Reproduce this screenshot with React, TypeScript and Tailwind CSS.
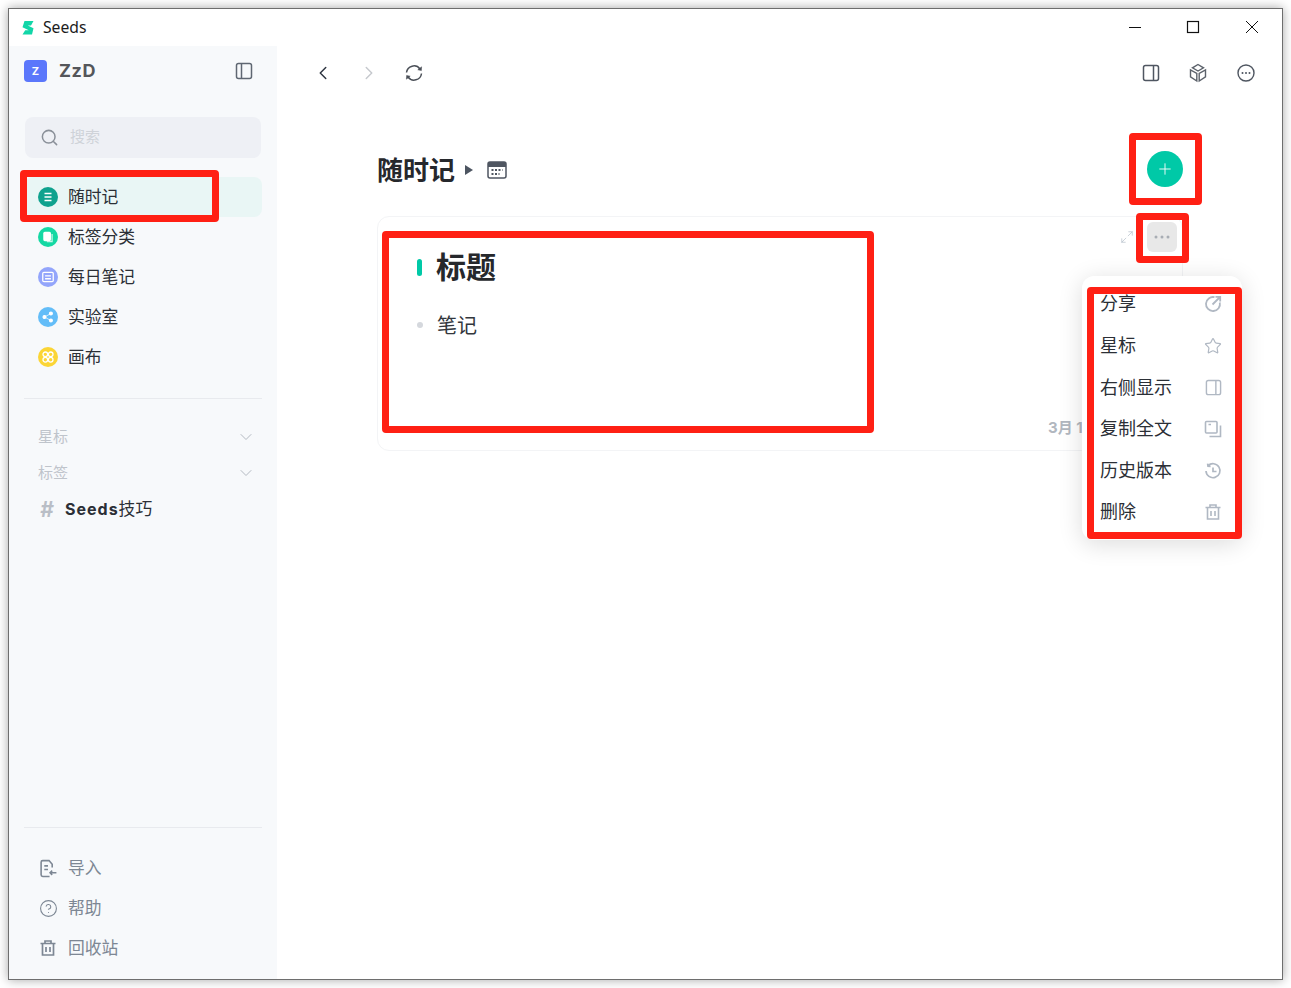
import type { ReactNode } from 'react';
import { ChevronDown, ChevronLeft, ChevronRight, CircleHelp, Maximize2, Plus, Search, Star } from 'lucide-react';

const FONT = "font-['Inter','Noto_Sans_CJK_SC',sans-serif]";

function Logo() {
  return (
    <svg width="14" height="16" viewBox="0 0 14 16">
      <path d="M3.5 1H12.5L10 5.5H6.8L12.5 8.2 11 14.5H1.5L4.2 10.2H7.8L1.5 7.2z" fill="#12d6a8" />
    </svg>
  );
}

function PanelIcon({ side, className }: { side: 'left' | 'right'; className?: string }) {
  const x = side === 'left' ? 6.5 : 11.5;
  return (
    <svg width="18" height="18" viewBox="0 0 18 18" fill="none" stroke="currentColor" strokeWidth="1.5" className={className}>
      <rect x="1.5" y="1.5" width="15" height="15" rx="2" />
      <path d={`M${x} 1.5v15`} />
    </svg>
  );
}

function TrashIcon({ size, width }: { size: number; width: number }) {
  return (
    <svg width={size} height={size} viewBox="0 0 18 18" fill="none" stroke="currentColor" strokeWidth={width}>
      <path d="M1.5 4.5h15M6 4.5V2h6v2.5M3.5 4.5V16h11V4.5M7 8v5M11 8v5" />
    </svg>
  );
}

function NavDot({ color, children }: { color: string; children: ReactNode }) {
  return (
    <span className={`flex h-5 w-5 shrink-0 items-center justify-center rounded-full ${color}`}>
      <svg width="14" height="14" viewBox="0 0 12 12" fill="none" stroke="white" strokeWidth="1.1">
        {children}
      </svg>
    </span>
  );
}

function NavItem({ icon, label, active }: { icon: ReactNode; label: string; active?: boolean }) {
  return (
    <div className={`flex h-10 items-center gap-[10px] rounded-lg pl-[13px] text-[16.8px] leading-none text-[#2b2f36] ${active ? 'bg-[#e9f6f5]' : ''}`}>
      {icon}
      <span>{label}</span>
    </div>
  );
}

function FootItem({ icon, label }: { icon: ReactNode; label: string }) {
  return (
    <div className="flex h-10 items-center gap-[10px] pl-[13px] text-[16.8px] leading-none text-[#7d8794]">
      <span className="flex h-5 w-5 items-center justify-center text-[#7d8794]">{icon}</span>
      <span>{label}</span>
    </div>
  );
}

function SectionHead({ label }: { label: string }) {
  return (
    <div className="flex h-9 items-center justify-between pl-[13px] pr-[6px] text-[15px] text-[#bfc4cb]">
      <span>{label}</span>
      <ChevronDown size={20} strokeWidth={1.2} className="text-[#b4bac2]" />
    </div>
  );
}

function MenuRow({ label, icon }: { label: string; icon: ReactNode }) {
  return (
    <div className="flex h-[41.6px] items-center justify-between pl-[18px] pr-[20px] text-lg leading-none text-[#2b2f36]">
      <span>{label}</span>
      <span className="flex h-[18px] w-[18px] items-center justify-center text-[#b0b8c3]">{icon}</span>
    </div>
  );
}

function Annot({ className }: { className: string }) {
  return <div className={`pointer-events-none absolute rounded-[4px] border-[7px] border-[#ff2014] ${className}`} />;
}

export default function App() {
  return (
    <div className={`relative h-[988px] w-[1291px] overflow-hidden bg-white p-2 ${FONT}`}>
      <div className="flex h-[972px] w-[1275px] flex-col border border-[#6e6e6e] bg-white shadow-[0_0_10px_rgba(0,0,0,0.35)]">
        {/* title bar */}
        <div className="flex h-[37px] shrink-0 items-center pl-[12px]">
          <Logo />
          <span className="ml-[8px] font-['Noto_Sans'] text-[15.7px] text-[#1c1c1c]">Seeds</span>
          <div className="mb-[2px] ml-auto flex items-center pr-[1px] text-[#111]">
            <svg width="58" height="14" viewBox="0 0 58 14" fill="none" stroke="currentColor">
              <path d="M23 7.5h12" />
            </svg>
            <svg width="58" height="14" viewBox="0 0 58 14" fill="none" stroke="currentColor" strokeWidth="1.2">
              <rect x="23.5" y="1.5" width="11" height="11" />
            </svg>
            <svg width="58" height="14" viewBox="0 0 58 14" fill="none" stroke="currentColor" className="ml-px">
              <path d="M23 1l12 12M35 1 23 13" />
            </svg>
          </div>
        </div>

        <div className="flex min-h-0 flex-1">
          {/* sidebar */}
          <aside className="flex w-[268px] shrink-0 flex-col bg-[#f7f9fb] pl-[16px] pr-[15px]">
            <div className="flex h-[50px] items-center">
              <span className="-ml-px flex h-[22px] w-[23px] items-center justify-center rounded-[4px] bg-[#5b77fb] text-[11px] font-bold text-white">Z</span>
              <span className="ml-[12px] text-lg font-bold tracking-[0.6px] text-[#54565a]">ZzD</span>
              <PanelIcon side="left" className="ml-auto mr-[9px] text-[#5f6772]" />
            </div>
            <div className="mt-[21px] mr-px flex h-[41px] items-center rounded-lg bg-[#eef0f5] pl-[15px] text-[15px] text-[#cfd3d9]">
              <Search size={19} strokeWidth={1.9} className="text-[#8a9099]" />
              <span className="ml-[11px]">搜索</span>
            </div>
            <div className="mt-[19px] flex flex-col">
              <NavItem
                active
                label="随时记"
                icon={
                  <NavDot color="bg-[#0fa28e]">
                    <path d="M3 3h6M3 6h6M3 9h6" />
                  </NavDot>
                }
              />
              <NavItem
                label="标签分类"
                icon={
                  <NavDot color="bg-[#15d8a3]">
                    <rect x="2.5" y="2" width="5.5" height="7" rx="0.8" fill="white" />
                    <path d="M9.5 3.5v6.5H5" stroke="#c8f6e9" />
                  </NavDot>
                }
              />
              <NavItem
                label="每日笔记"
                icon={
                  <NavDot color="bg-[#93a5fb]">
                    <rect x="1.5" y="2" width="9" height="8" rx="1" />
                    <path d="M3.5 5h5M3.5 7.5h5" />
                  </NavDot>
                }
              />
              <NavItem
                label="实验室"
                icon={
                  <NavDot color="bg-[#63bdf8]">
                    <circle cx="8.5" cy="3" r="1.2" fill="white" />
                    <circle cx="3" cy="6" r="1.2" fill="white" />
                    <circle cx="8.5" cy="9" r="1.2" fill="white" />
                    <path d="M8.5 3 3 6l5.5 3" strokeWidth="0.6" />
                  </NavDot>
                }
              />
              <NavItem
                label="画布"
                icon={
                  <NavDot color="bg-[#fbd535]">
                    <circle cx="3.7" cy="3.7" r="2" />
                    <circle cx="8.3" cy="3.7" r="2" />
                    <circle cx="3.7" cy="8.3" r="2" />
                    <circle cx="8.3" cy="8.3" r="2" />
                  </NavDot>
                }
              />
            </div>
            <div className="mt-[21px] -ml-px h-px bg-[#e8eaee]" />
            <div className="mt-[20px] flex flex-col">
              <SectionHead label="星标" />
              <SectionHead label="标签" />
              <div className="flex h-9 items-center pl-[15px] text-[16.8px] leading-none text-[#2b2f36]">
                <span className="w-[25px] text-[21px] font-bold italic leading-none text-[#b9bec6]">#</span>
                <span>
                  <span className="text-base font-bold tracking-[1px]">Seeds</span>技巧
                </span>
              </div>
            </div>
            <div className="mt-auto -ml-px h-px bg-[#e8eaee]" />
            <div className="mt-[20px] mb-[11px] flex flex-col">
              <FootItem
                label="导入"
                icon={
                  <svg width="19" height="19" viewBox="0 0 18 18" fill="none" stroke="currentColor" strokeWidth="1.5">
                    <path d="M12.5 8V5L9.5 1.5H3.5A1.5 1.5 0 0 0 2 3v12A1.5 1.5 0 0 0 3.5 16.5H10M5 6.5h3.5M5 10h3.5M16.5 13h-6M12.5 11l-2 2 2 2" />
                  </svg>
                }
              />
              <FootItem label="帮助" icon={<CircleHelp size={19} strokeWidth={1.4} />} />
              <FootItem label="回收站" icon={<TrashIcon size={18} width={1.7} />} />
            </div>
          </aside>

          {/* main */}
          <main className="relative min-w-0 flex-1 pl-[100px] pr-[99px]">
            <div className="-ml-[65px] -mr-[73px] flex h-[53px] items-center">
              <ChevronLeft size={22} strokeWidth={1.6} className="text-[#2d3540]" />
              <ChevronRight size={22} strokeWidth={1.6} className="ml-[24px] text-[#c6c9ce]" />
              <svg width="20" height="20" viewBox="0 0 20 20" fill="none" stroke="#4a4f57" strokeWidth="1.5" className="ml-[24px]">
                <path d="M2.5 9.5A7.5 7.5 0 0 1 16 6M17.5 10.5A7.5 7.5 0 0 1 4 14" />
                <path d="M17.6 3.8 17.4 7.6 13.8 6.8zM2.4 16.2 2.6 12.4 6.2 13.2z" fill="#4a4f57" strokeWidth="0.5" />
              </svg>
              <PanelIcon side="right" className="ml-auto text-[#4f5661]" />
              <svg width="20" height="20" viewBox="0 0 20 20" fill="none" stroke="#5c626b" strokeWidth="1.4" className="ml-[28px]">
                <path d="M10 1.5 15.5 4.8 10 8 4.5 4.8zM2.5 7v6.8L8.8 18v-7.5zM17.5 7v6.8L11.2 18v-7.5z" />
              </svg>
              <svg width="20" height="20" viewBox="0 0 20 20" fill="none" stroke="#4f5661" strokeWidth="1.4" className="ml-[28px]">
                <circle cx="10" cy="10" r="8" />
                <path d="M6.5 10h.01M10 10h.01M13.5 10h.01" strokeWidth="2" strokeLinecap="round" />
              </svg>
            </div>

            <div className="mt-[51px] flex h-[40px] items-center justify-between">
              <div className="flex items-center">
                <span className="text-[26px] font-bold text-[#26282c]">随时记</span>
                <span className="ml-[10px] h-0 w-0 border-y-[5px] border-l-[8px] border-y-transparent border-l-[#4d5561]" />
                <svg width="20" height="18" viewBox="0 0 20 18" className="ml-[14px]" fill="none">
                  <rect x="1" y="1" width="18" height="16" rx="2" stroke="#4f5661" strokeWidth="1.5" />
                  <rect x="1" y="1" width="18" height="5" fill="#4f5661" />
                  <path d="M4.5 9h11M4.5 13h8" stroke="#4f5661" strokeWidth="2" strokeDasharray="2 1.5" />
                </svg>
              </div>
              <button className="flex h-9 w-9 -translate-y-px items-center justify-center rounded-full bg-[#00c9a7] text-white">
                <Plus size={18} strokeWidth={1.2} />
              </button>
            </div>

            <div className="relative mt-[26px] h-[235px] rounded-xl border border-[#f3f4f6]">
              <div className="absolute right-[5px] top-[5px] flex items-center gap-[13px]">
                <Maximize2 size={14} strokeWidth={1.2} className="text-[#b5bfc9]" />
                <span className="flex h-[30px] w-[30px] items-center justify-center rounded-md bg-[#e8e8e8] text-[#a8adb4]">
                  <svg width="18" height="4" viewBox="0 0 18 4" fill="currentColor">
                    <circle cx="3" cy="2" r="1.5" />
                    <circle cx="9" cy="2" r="1.5" />
                    <circle cx="15" cy="2" r="1.5" />
                  </svg>
                </span>
              </div>
              <div className="flex items-center pl-[39px] pt-[30px]">
                <span className="h-[17px] w-[5px] rounded-full bg-[#00c9a7]" />
                <span className="ml-[14px] text-[30px] font-bold leading-10 text-[#26282c]">标题</span>
              </div>
              <div className="mt-[25px] flex items-center pl-[39px]">
                <span className="h-[6px] w-[6px] -translate-y-px rounded-full bg-[#d5d8dd]" />
                <span className="ml-[14px] text-xl text-[#33373d]">笔记</span>
              </div>
              <span className="absolute left-[670px] top-[200px] text-[15px] font-bold text-[#b1b7bf]">3月 1</span>
            </div>
          </main>
        </div>
      </div>

      {/* overflow menu */}
      <div className="absolute left-[1082px] top-[276px] flex h-[264px] w-[160px] flex-col justify-end rounded-xl bg-white pb-[6.8px] shadow-[0_4px_24px_rgba(0,0,0,0.14)]">
        <MenuRow
          label="分享"
          icon={
            <svg width="18" height="18" viewBox="0 0 18 18" fill="none" stroke="currentColor" strokeWidth="1.8">
              <path d="M10.5 2.2A7 7 0 1 0 15.8 7.5M8.5 9.5 16 2M11.5 1.8H16.2V6.5" />
            </svg>
          }
        />
        <MenuRow label="星标" icon={<Star size={20} strokeWidth={1.6} />} />
        <MenuRow label="右侧显示" icon={<PanelIcon side="right" className="h-[17px] w-[17px]" />} />
        <MenuRow
          label="复制全文"
          icon={
            <svg width="18" height="18" viewBox="0 0 18 18" fill="none" stroke="currentColor" strokeWidth="1.6">
              <rect x="1.5" y="1.5" width="11.5" height="11.5" rx="1" />
              <path d="M16.5 5.5V16.5H5.5M4.5 4.5h2.5" />
            </svg>
          }
        />
        <MenuRow
          label="历史版本"
          icon={
            <svg width="18" height="18" viewBox="0 0 18 18" fill="none" stroke="currentColor" strokeWidth="1.7">
              <path d="M4 3.8A7 7 0 1 1 2 9M3.6 1.6 4 4.2l2.6.2M9 5.5V9.5h3.5" />
            </svg>
          }
        />
        <MenuRow label="删除" icon={<TrashIcon size={18} width={1.6} />} />
      </div>

      {/* red annotations */}
      <Annot className="left-[20px] top-[170px] h-[52px] w-[199px]" />
      <Annot className="left-[1129px] top-[133px] h-[72px] w-[73px]" />
      <Annot className="left-[1136px] top-[213px] h-[50px] w-[53px]" />
      <Annot className="left-[382px] top-[231px] h-[202px] w-[492px]" />
      <Annot className="left-[1087px] top-[287px] h-[252px] w-[155px]" />
    </div>
  );
}
